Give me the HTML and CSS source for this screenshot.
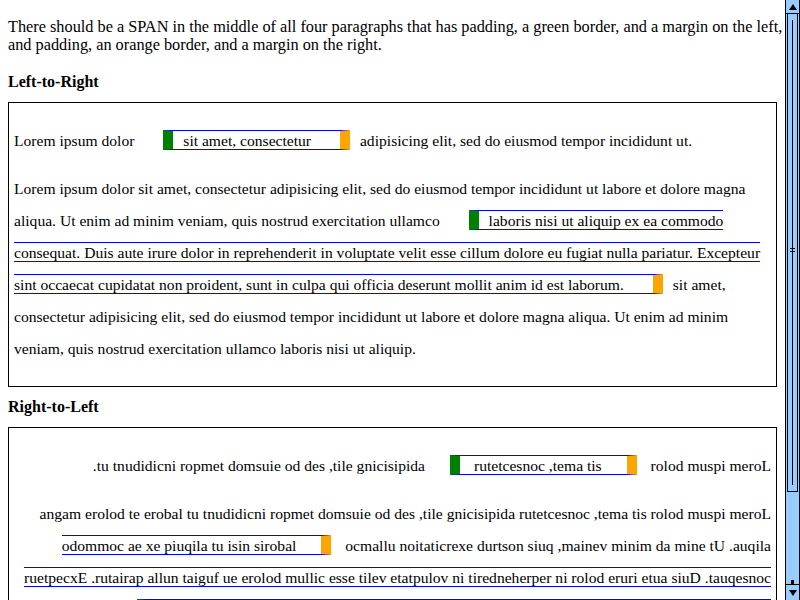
FILE: index.html
```
<!DOCTYPE html>
<html>
<head>
	<title>Inline box borders and bidi</title>
	<link rel="stylesheet" href="styles.css">
</head>
<body>
	<div id="window">
		<div id="page">
			<p class="intro">There should be a SPAN in the middle of all four paragraphs that has padding, a green border, and a margin on the left, and padding, an orange border, and a margin on the right.</p>

			<h4>Left-to-Right</h4>
			<div class="test">
				<p>Lorem ipsum dolor <span class="box">sit amet, consectetur </span>adipisicing elit, sed do eiusmod tempor incididunt ut.</p>
				<p>Lorem ipsum dolor sit amet, consectetur adipisicing elit, sed do eiusmod tempor incididunt ut labore et dolore magna aliqua. Ut enim ad minim veniam, quis nostrud exercitation ullamco <span class="box">laboris nisi ut aliquip ex ea commodo consequat. Duis aute irure dolor in reprehenderit in voluptate velit esse cillum dolore eu fugiat nulla pariatur. Excepteur sint occaecat cupidatat non proident, sunt in culpa qui officia deserunt mollit anim id est laborum. </span>sit amet, consectetur adipisicing elit, sed do eiusmod tempor incididunt ut labore et dolore magna aliqua. Ut enim ad minim veniam, quis nostrud exercitation ullamco laboris nisi ut aliquip.</p>
			</div>

			<h4>Right-to-Left</h4>
			<div class="test">
				<p class="rtl">Lorem ipsum dolor <span class="box">sit amet, consectetur </span>adipisicing elit, sed do eiusmod tempor incididunt ut.</p>
				<p class="rtl">Lorem ipsum dolor sit amet, consectetur adipisicing elit, sed do eiusmod tempor incididunt ut labore et dolore magna aliqua. Ut enim ad minim veniam, quis nostrud exercitation ullamco <span class="box">laboris nisi ut aliquip ex ea commodo consequat. Duis aute irure dolor in reprehenderit in voluptate velit esse cillum dolore eu fugiat nulla pariatur. Excepteur sint occaecat cupidatat non proident, sunt in culpa qui officia deserunt mollit anim id est laborum. </span>sit amet, consectetur adipisicing elit, sed do eiusmod tempor incididunt ut labore et dolore magna aliqua. Ut enim ad minim veniam, quis nostrud exercitation ullamco laboris nisi ut aliquip.</p>
			</div>
		</div>

		<!-- painted scrollbar, the page itself does not scroll -->
		<div id="scrollbar">
			<div class="arrow up"><span></span></div>
			<div class="thumb"><div class="rail"></div><div class="grip"></div></div>
			<div class="track"></div>
			<div class="arrow down"><span></span></div>
		</div>
	</div>
</body>
</html>
```

FILE: styles.css
```
*
{
	box-sizing: border-box;
}
html, body
{
	margin: 0px;
	padding: 0px;
	height: 100%;
	overflow: hidden;
}
body
{
	font-family: "Liberation Serif", "Times New Roman", serif;
	font-size: 16px;
	color: black;
	background: white;
}
#window
{
	display: flex;
	width: 800px;
	height: 600px;
}
#page
{
	width: 785px;
	height: 600px;
	overflow: hidden;
	padding: 0px 8px;
}
p
{
	margin: 16px 0px;
}
.intro
{
	font-size: 16.3px;
	line-height: 18px;
	margin: 18px -10px 19px 0px;
}
h4
{
	font-size: 16px;
	font-weight: bold;
	margin: 11px 0px 11px 0px;
}
.test
{
	border: 1px solid black;
	padding: 6px 5px 5px 5px;
}
.test p
{
	font-size: 15.6px;
	line-height: 32px;
}
.rtl
{
	direction: rtl;
	unicode-bidi: bidi-override;
}
.box
{
	border-top: 1px solid blue;
	border-bottom: 1px solid blue;
	border-left: 10px solid green;
	border-right: 10px solid orange;
	padding: 1px 25px 0px 10px;
	margin: 0px 10px 0px 25px;
}

/* scrollbar */
#scrollbar
{
	width: 15px;
	height: 600px;
	display: flex;
	flex-direction: column;
	background: #99ccff;
	border-left: 1px solid black;
	border-right: 1px solid black;
}
.arrow
{
	height: 14px;
	display: flex;
	align-items: center;
	justify-content: center;
	position: relative;
}
.arrow span
{
	width: 0px;
	height: 0px;
	border-left: 4px solid transparent;
	border-right: 4px solid transparent;
}
.up
{
	border-bottom: 1px solid black;
}
.up span
{
	border-bottom: 6px solid black;
}
.down
{
	border-top: 1px solid black;
	height: 16px;
}
.down span
{
	border-top: 6px solid black;
}
.down::before
{
	content: "";
	position: absolute;
	top: -5px;
	left: 5px;
	width: 3px;
	height: 4px;
	background: black;
}
.thumb
{
	height: 478px;
	margin: 0px 1px;
	border: 1px solid black;
	border-top: none;
	display: flex;
	justify-content: center;
	position: relative;
}
.rail
{
	width: 1px;
	margin: 6px 0px 6px 0px;
	background: black;
}
.grip
{
	position: absolute;
	left: 2px;
	top: 234px;
	width: 5px;
	height: 4px;
	border-top: 1px solid black;
	border-bottom: 1px solid black;
}
.track
{
	flex: 1;
}
```
